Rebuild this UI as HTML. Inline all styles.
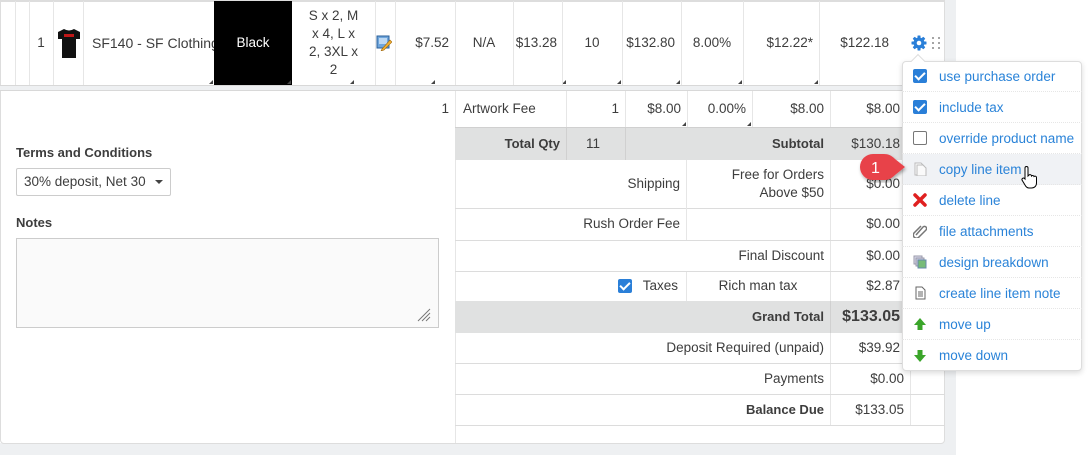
<!DOCTYPE html>
<html><head><meta charset="utf-8"><style>
*{box-sizing:border-box;margin:0;padding:0}
body{width:1090px;height:455px;overflow:hidden;background:#fff;font-family:"Liberation Sans",sans-serif;font-size:13px;color:#3d3d3d;position:relative}
.a{position:absolute}
.c{position:absolute;display:flex;align-items:center;justify-content:flex-end;padding-right:6px;text-align:right;line-height:18px}
.cc{justify-content:center;text-align:center;padding:0}
.l{justify-content:flex-start;padding-left:8px}
.vl{position:absolute;width:1px;background:#e6e6e6}
.hl{position:absolute;height:1px;background:#dcdcdc}
.tri{position:absolute;width:0;height:0;border-left:4px solid transparent;border-bottom:4px solid #444}
.b{font-weight:bold}
.mi{position:absolute;left:902px;width:180px;height:31px;display:flex;align-items:center;color:#2a83d8;font-size:13.5px;border-bottom:1px dotted #e6e6e6}
.mi .ic{width:14px;height:14px;margin-left:11px;margin-right:12px;flex:none;position:relative}
.cb{background:#2a7fd8;border-radius:2px}
.cb:after{content:"";position:absolute;left:4px;top:1px;width:4px;height:8px;border:solid #fff;border-width:0 2px 2px 0;transform:rotate(45deg)}
.r1{font-size:13.5px}
</style></head><body>
<div class="a" style="left:944px;top:0;width:12px;height:455px;background:#eef0f2"></div>
<div class="a" style="left:0;top:443px;width:956px;height:12px;background:#eef0f2"></div>
<div class="a" style="left:0;top:0;width:945px;height:444px;background:#fff;border:1px solid #ddd;border-radius:0 0 4px 4px"></div>
<div class="hl" style="left:0;top:1px;width:945px;background:#ddd"></div>
<div class="a" style="left:0;top:85px;width:945px;height:6px;background:#eef0f2;border-top:1px solid #d8d8d8;border-bottom:1px solid #d8d8d8"></div>
<div class="vl" style="left:15px;top:1px;height:84px"></div>
<div class="vl" style="left:29px;top:1px;height:84px"></div>
<div class="vl" style="left:53px;top:1px;height:84px"></div>
<div class="vl" style="left:83px;top:1px;height:84px"></div>
<div class="c cc r1" style="left:29px;top:1px;width:24px;height:84px">1</div>
<svg class="a" style="left:57px;top:28px" width="24" height="31" viewBox="0 0 24 31"><path d="M7 1 L1 4 L1 11 L5 11 L5 30 L19 30 L19 11 L23 11 L23 4 L17 1 Q12 4 7 1Z" fill="#111"/><rect x="7" y="6" width="10" height="3" fill="#c01818"/></svg>
<div class="a r1" style="left:92px;top:35px;width:122px;white-space:nowrap;overflow:hidden;line-height:16px;font-size:14px">SF140 - SF Clothing Unisex</div>
<div class="tri" style="left:209px;top:80px"></div>
<div class="c cc r1" style="left:214px;top:1px;width:78px;height:84px;background:#000;color:#fff">Black</div>
<div class="tri" style="left:287px;top:80px"></div>
<div class="c cc r1" style="left:292px;top:1px;width:83px;height:84px;padding:0 13px">S x 2, M x 4, L x 2, 3XL x 2</div>
<div class="tri" style="left:350px;top:80px"></div>
<div class="vl" style="left:375px;top:1px;height:84px"></div>
<svg class="a" style="left:376px;top:35px" width="16" height="16" viewBox="0 0 16 16"><rect x="1" y="1" width="12" height="12" fill="#6fa6dc" stroke="#2a5f9a"/><rect x="3" y="3" width="8" height="6" fill="#bcd8f3"/><path d="M6 14 L14 5 L16 7 L8 15 L5 16Z" fill="#f0b030" stroke="#a06810" stroke-width=".6"/></svg>
<div class="vl" style="left:395px;top:1px;height:84px"></div>
<div class="c r1" style="left:395px;top:1px;width:60px;height:84px">$7.52</div>
<div class="tri" style="left:431px;top:80px"></div>
<div class="vl" style="left:455px;top:1px;height:84px"></div>
<div class="c cc r1" style="left:455px;top:1px;width:58px;height:84px">N/A</div>
<div class="vl" style="left:513px;top:1px;height:84px"></div>
<div class="c r1" style="left:513px;top:1px;width:49px;height:84px;padding-right:5px">$13.28</div>
<div class="tri" style="left:562px;top:80px"></div>
<div class="vl" style="left:562px;top:1px;height:84px"></div>
<div class="c cc r1" style="left:562px;top:1px;width:60px;height:84px">10</div>
<div class="tri" style="left:617px;top:80px"></div>
<div class="vl" style="left:622px;top:1px;height:84px"></div>
<div class="c r1" style="left:622px;top:1px;width:59px;height:84px">$132.80</div>
<div class="tri" style="left:676px;top:80px"></div>
<div class="vl" style="left:681px;top:1px;height:84px"></div>
<div class="c cc r1" style="left:681px;top:1px;width:62px;height:84px">8.00%</div>
<div class="tri" style="left:738px;top:80px"></div>
<div class="vl" style="left:743px;top:1px;height:84px"></div>
<div class="c r1" style="left:743px;top:1px;width:76px;height:84px">$12.22*</div>
<div class="tri" style="left:814px;top:80px"></div>
<div class="vl" style="left:819px;top:1px;height:84px"></div>
<div class="c r1" style="left:819px;top:1px;width:76px;height:84px">$122.18</div>
<svg class="a" style="left:911px;top:35px" width="16" height="16" viewBox="0 0 16 16"><g fill="#2a7fd8"><circle cx="8" cy="8" r="5.5"/><rect x="6.5" y="0.5" width="3" height="15" rx=".5"/><rect x="0.5" y="6.5" width="15" height="3" rx=".5"/><rect x="6.5" y="0.5" width="3" height="15" rx=".5" transform="rotate(45 8 8)"/><rect x="6.5" y="0.5" width="3" height="15" rx=".5" transform="rotate(-45 8 8)"/></g><circle cx="8" cy="8" r="2.3" fill="#fff"/></svg>
<svg class="a" style="left:931px;top:36px" width="10" height="14"><g fill="#888"><circle cx="2" cy="2" r="1"/><circle cx="8" cy="2" r="1"/><circle cx="2" cy="7" r="1"/><circle cx="8" cy="7" r="1"/><circle cx="2" cy="12" r="1"/><circle cx="8" cy="12" r="1"/></g></svg>
<div class="c r1" style="left:400px;top:91px;width:55px;height:36px">1</div>
<div class="vl" style="left:455px;top:91px;height:352px"></div>
<div class="c l r1" style="left:455px;top:91px;width:111px;height:36px">Artwork Fee</div>
<div class="vl" style="left:566px;top:91px;height:36px"></div>
<div class="c r1" style="left:566px;top:91px;width:59px;height:36px">1</div>
<div class="vl" style="left:625px;top:91px;height:36px"></div>
<div class="c r1" style="left:625px;top:91px;width:62px;height:36px">$8.00</div>
<div class="tri" style="left:682px;top:122px"></div>
<div class="vl" style="left:687px;top:91px;height:36px"></div>
<div class="c r1" style="left:687px;top:91px;width:65px;height:36px">0.00%</div>
<div class="tri" style="left:747px;top:122px"></div>
<div class="vl" style="left:752px;top:91px;height:36px"></div>
<div class="c r1" style="left:752px;top:91px;width:78px;height:36px">$8.00</div>
<div class="vl" style="left:830px;top:91px;height:334px"></div>
<div class="c r1" style="left:830px;top:91px;width:72px;height:36px;padding-right:2px">$8.00</div>
<div class="vl" style="left:910px;top:91px;height:334px"></div>
<div class="a" style="left:455px;top:127px;width:489px;height:33px;background:#e0e1e1;border-top:1px solid #d0d0d0"></div>
<div class="c b" style="left:455px;top:127px;width:111px;height:33px">Total Qty</div>
<div class="vl" style="left:566px;top:127px;height:33px;background:#d0d0d0"></div>
<div class="c l r1" style="left:566px;top:127px;width:59px;height:33px;padding-left:20px">11</div>
<div class="vl" style="left:625px;top:127px;height:33px;background:#d0d0d0"></div>
<div class="c b" style="left:625px;top:127px;width:205px;height:33px">Subtotal</div>
<div class="c r1" style="left:830px;top:127px;width:72px;height:33px;padding-right:2px">$130.18</div>
<div class="c r1" style="left:455px;top:160px;width:231px;height:48px">Shipping</div>
<div class="vl" style="left:686px;top:160px;height:48px"></div>
<div class="vl" style="left:686px;top:271px;height:30px"></div>
<div class="c r1" style="left:686px;top:160px;width:144px;height:48px">Free for Orders<br>Above $50</div>
<div class="c r1" style="left:830px;top:160px;width:72px;height:48px;padding-right:2px">$0.00</div>
<div class="hl" style="left:455px;top:208px;width:490px"></div>
<div class="c r1" style="left:455px;top:208px;width:231px;height:32px">Rush Order Fee</div>
<div class="vl" style="left:686px;top:208px;height:32px"></div>
<div class="c r1" style="left:830px;top:208px;width:72px;height:32px;padding-right:2px">$0.00</div>
<div class="hl" style="left:455px;top:240px;width:490px"></div>
<div class="c r1" style="left:455px;top:240px;width:375px;height:31px">Final Discount</div>
<div class="c r1" style="left:830px;top:240px;width:72px;height:31px;padding-right:2px">$0.00</div>
<div class="hl" style="left:455px;top:271px;width:490px"></div>
<div class="a cb" style="left:618px;top:279px;width:14px;height:14px"></div>
<div class="c r1" style="left:455px;top:271px;width:231px;height:30px;padding-right:8px">Taxes</div>
<div class="c cc r1" style="left:686px;top:271px;width:144px;height:30px">Rich man tax</div>
<div class="c r1" style="left:830px;top:271px;width:72px;height:30px;padding-right:2px">$2.87</div>
<div class="a" style="left:455px;top:301px;width:489px;height:32px;background:#e0e1e1"></div>
<div class="c b" style="left:455px;top:301px;width:375px;height:32px">Grand Total</div>
<div class="vl" style="left:830px;top:301px;height:32px;background:#d0d0d0"></div>
<div class="c b" style="left:830px;top:301px;width:72px;height:32px;font-size:16px;padding-right:2px">$133.05</div>
<div class="c r1" style="left:455px;top:333px;width:375px;height:30px">Deposit Required (unpaid)</div>
<div class="c r1" style="left:830px;top:333px;width:72px;height:30px;padding-right:2px">$39.92</div>
<div class="hl" style="left:455px;top:363px;width:490px"></div>
<div class="c r1" style="left:455px;top:363px;width:375px;height:31px">Payments</div>
<div class="c r1" style="left:830px;top:363px;width:80px;height:31px">$0.00</div>
<div class="hl" style="left:455px;top:394px;width:490px"></div>
<div class="c b" style="left:455px;top:394px;width:375px;height:31px">Balance Due</div>
<div class="c r1" style="left:830px;top:394px;width:80px;height:31px">$133.05</div>
<div class="hl" style="left:455px;top:425px;width:490px"></div>
<div class="a b" style="left:16px;top:145px">Terms and Conditions</div>
<div class="a r1" style="left:16px;top:168px;width:155px;height:28px;border:1px solid #ccc;border-radius:2px;padding:5px 0 0 7px">30% deposit, Net 30</div>
<div class="a" style="left:155px;top:180px;border-left:4px solid transparent;border-right:4px solid transparent;border-top:4px solid #444"></div>
<div class="a b" style="left:16px;top:215px">Notes</div>
<div class="a" style="left:16px;top:238px;width:423px;height:90px;border:1px solid #ccc;background:#fafafa"></div>
<svg class="a" style="left:416px;top:307px" width="16" height="16"><g stroke="#777" stroke-width="1"><path d="M2 14 L14 2M6 14 L14 6M10 14 L14 10"/></g></svg>
<div class="a" style="left:902px;top:61px;width:180px;height:310px;background:#fff;border:1px solid #ddd;border-radius:4px;box-shadow:0 2px 6px rgba(0,0,0,.15)"></div>
<div class="a" style="left:913px;top:56px;width:10px;height:10px;background:#fff;border-left:1px solid #ddd;border-top:1px solid #ddd;transform:rotate(45deg)"></div>
<div class="a" style="left:903px;top:154px;width:178px;height:31px;background:#f0f2f5"></div>
<div class="mi" style="top:61px"><div class="ic cb"></div>use purchase order</div>
<div class="mi" style="top:92px"><div class="ic cb"></div>include tax</div>
<div class="mi" style="top:123px"><div class="ic" style="border:1px solid #777;border-radius:2px"></div>override product name</div>
<div class="mi" style="top:154px"><svg class="ic" viewBox="0 0 14 14"><path d="M2 1h6l3 3v9H2z" fill="#fff" stroke="#bbb"/><path d="M4 3h6l3 3v8H4z" fill="#fafafa" stroke="#bbb"/></svg>copy line item</div>
<div class="mi" style="top:185px"><svg class="ic" viewBox="0 0 14 14"><path d="M2 2L12 12M12 2L2 12" stroke="#e02020" stroke-width="3.5" stroke-linecap="round"/></svg>delete line</div>
<div class="mi" style="top:216px"><svg class="ic" viewBox="0 0 14 14"><path d="M3 11L10 3a2 2 0 0 1 3 3L6 13a3 3 0 0 1-5-4L8 2" fill="none" stroke="#777" stroke-width="1.5"/></svg>file attachments</div>
<div class="mi" style="top:247px"><svg class="ic" viewBox="0 0 14 14"><rect x="1" y="1" width="8" height="8" fill="#dde" stroke="#99a"/><rect x="3" y="3" width="8" height="8" fill="#ccd" stroke="#99a"/><rect x="5" y="5" width="8" height="8" fill="#7b7" stroke="#68a"/></svg>design breakdown</div>
<div class="mi" style="top:278px"><svg class="ic" viewBox="0 0 14 14"><path d="M3 1h6l3 3v9H3z" fill="#fff" stroke="#666"/><path d="M5 6h5M5 8h5M5 10h5" stroke="#666"/></svg>create line item note</div>
<div class="mi" style="top:309px"><svg class="ic" viewBox="0 0 14 14"><path d="M7 1L13 8H9.5V13h-5V8H1z" fill="#3aa52a"/></svg>move up</div>
<div class="mi" style="top:340px;border:none"><svg class="ic" viewBox="0 0 14 14"><path d="M7 13L13 6H9.5V1h-5V6H1z" fill="#3aa52a"/></svg>move down</div>
<svg class="a" style="left:1020px;top:166px" width="20" height="24" viewBox="0 0 20 24"><path d="M5 2a1.5 1.5 0 0 1 3 0v8l1-1a1.5 1.5 0 0 1 2.5 1 1.5 1.5 0 0 1 2.5 .5 1.5 1.5 0 0 1 2.5 1V17c0 3-2 5-5 5H9c-2 0-3-1-4-3L2 14a1.5 1.5 0 0 1 2.5-1.5L5 13z" fill="#fff" stroke="#000" stroke-width="1"/></svg>
<svg class="a" style="left:856px;top:151px" width="54" height="38" viewBox="0 0 54 38"><defs><filter id="s"><feDropShadow dx="1" dy="2" stdDeviation="1.5" flood-opacity=".35"/></filter></defs><path d="M17 3h11c5 0 8 2 11 5l10 8-10 8c-3 3-6 5-11 5H17a13 13 0 0 1 0-26z" fill="#e8424a" filter="url(#s)"/></svg>
<div class="a" style="left:871px;top:160px;color:#fff;font-size:16px">1</div>
</body></html>
